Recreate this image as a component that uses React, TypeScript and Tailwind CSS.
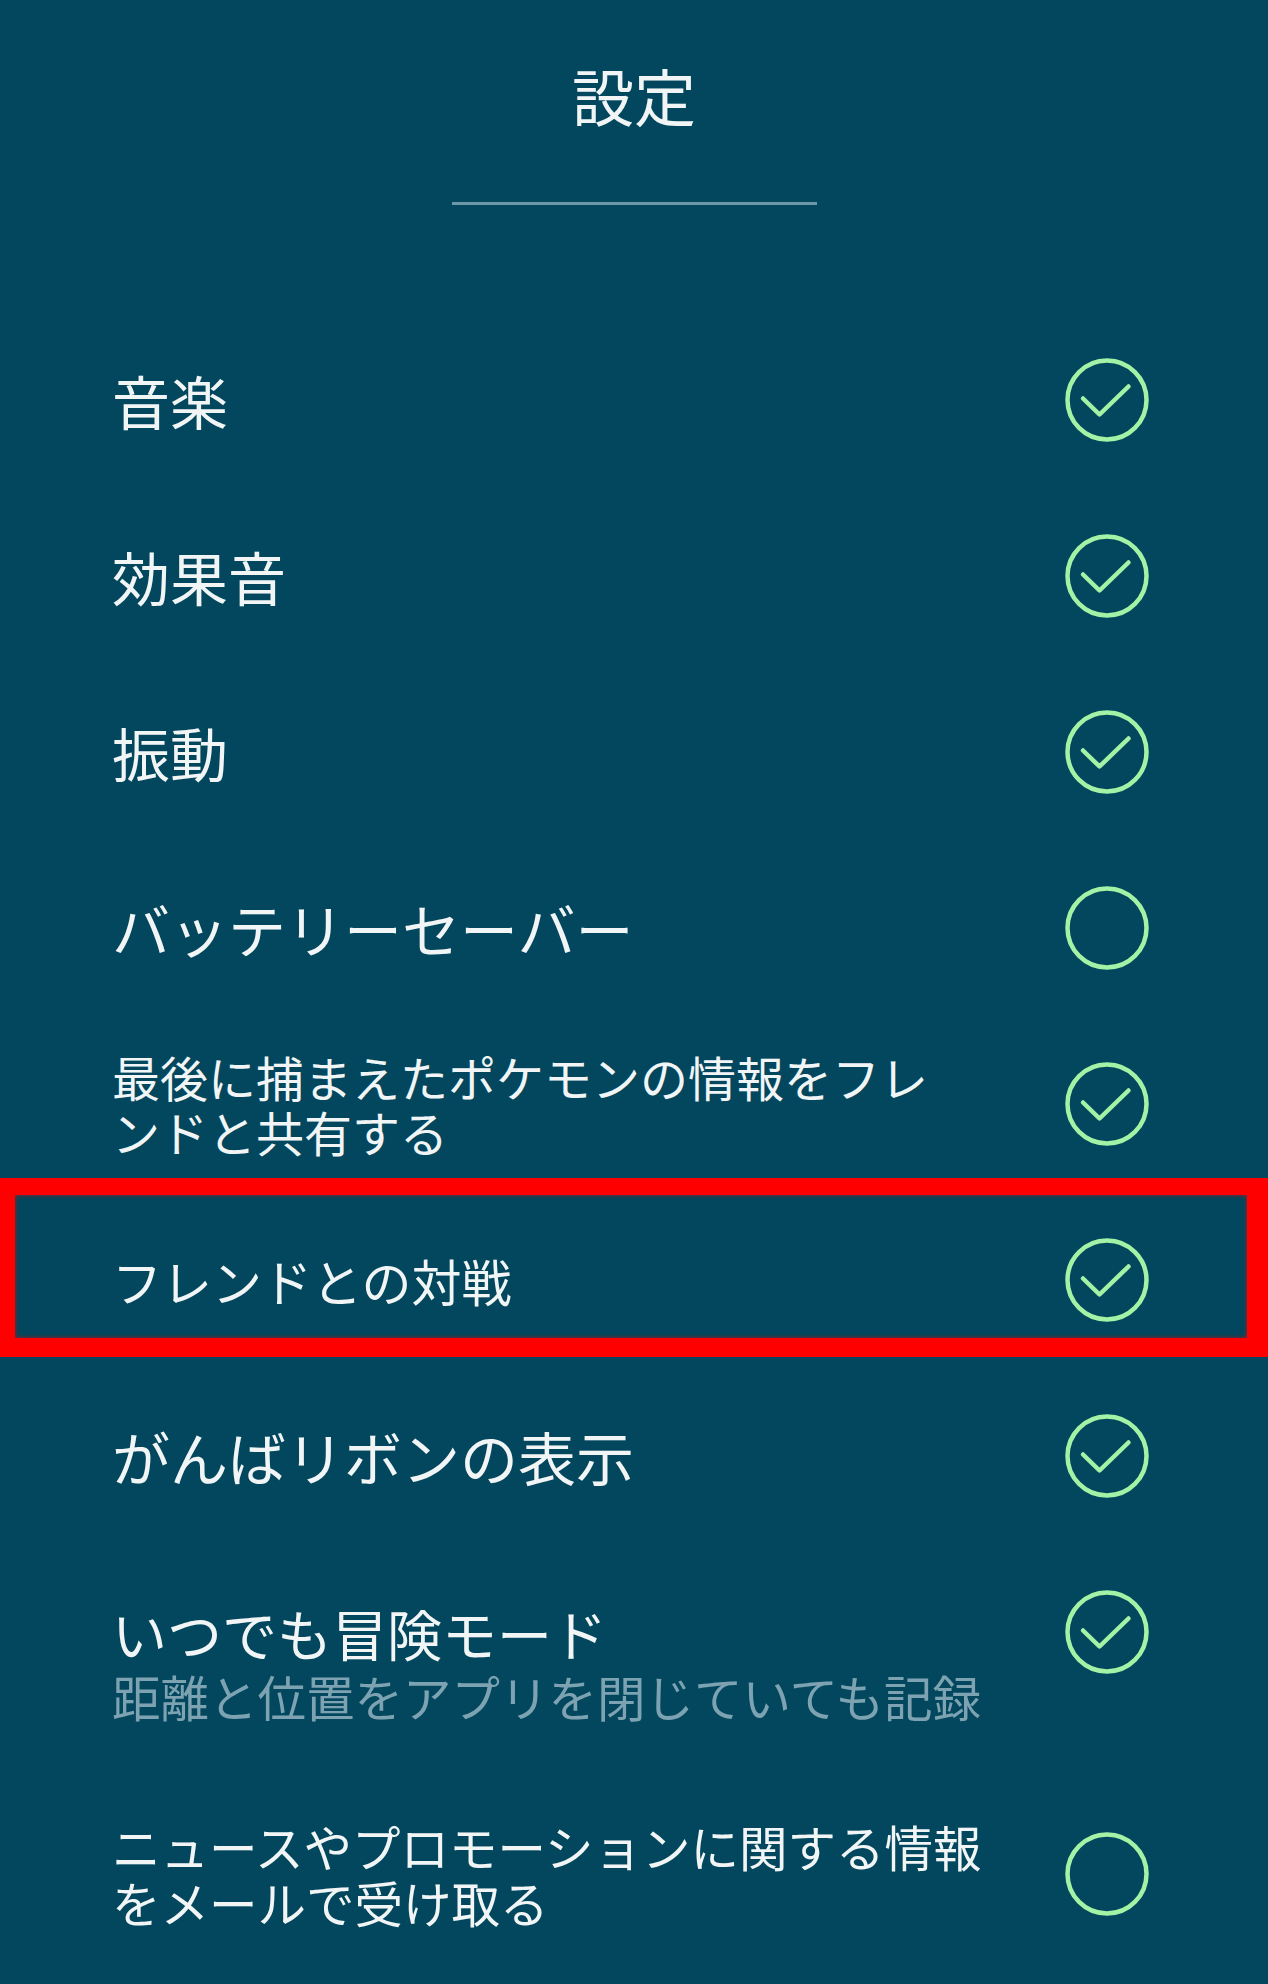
const font = { fontFamily: '"Noto Sans CJK JP", "Noto Sans", sans-serif' };

const CheckCircle = ({ checked }: { checked: boolean }) => (
  <svg width="84" height="84" viewBox="0 0 84 84" fill="none" className="shrink-0">
    <circle cx="42" cy="42" r="39.5" stroke="#a3f2a5" strokeWidth="4.5" />
    {checked && (
      <path
        d="M18 40.5 L34.5 56.5 L63.5 28.5"
        stroke="#a3f2a5"
        strokeWidth="4.5"
        strokeLinecap="round"
        strokeLinejoin="round"
      />
    )}
  </svg>
);

type Item = { lines: string[]; checked: boolean; size: string };

const items: Item[] = [
  { lines: ["音楽"], checked: true, size: "text-[58px] leading-[64px]" },
  { lines: ["効果音"], checked: true, size: "text-[58px] leading-[64px]" },
  { lines: ["振動"], checked: true, size: "text-[58px] leading-[64px]" },
  { lines: ["バッテリーセーバー"], checked: false, size: "text-[58px] leading-[64px]" },
  {
    lines: ["最後に捕まえたポケモンの情報をフレ", "ンドと共有する"],
    checked: true,
    size: "text-[48px] leading-[55px]",
  },
  { lines: ["フレンドとの対戦"], checked: true, size: "text-[50px] leading-[60px]" },
  { lines: ["がんばリボンの表示"], checked: true, size: "text-[58px] leading-[64px]" },
];

const Row = ({ item }: { item: Item }) => (
  <div className="h-[176px] flex items-center justify-between pl-[112px] pr-[119px]">
    <div className={item.size}>
      {item.lines.map((l) => (
        <div key={l} className="whitespace-nowrap">
          {l}
        </div>
      ))}
    </div>
    <CheckCircle checked={item.checked} />
  </div>
);

export default function App() {
  return (
    <div className="relative w-[1268px] h-[1984px] overflow-hidden bg-[#02475d] text-[#f1f5f6]" style={font}>
      <div className="pt-[64px] flex flex-col items-center">
        <div className="text-[62px] leading-[62px] h-[62px]">設定</div>
        <div className="mt-[76px] w-[365px] h-[3px] bg-[#6e98aa]" />
      </div>

      <div className="mt-[107px]">
        {items.map((it, i) => (
          <Row key={i} item={it} />
        ))}

        <div className="pt-[56px] flex justify-between items-start pl-[112px] pr-[119px]">
          <div>
            <div className="text-[55px] leading-[64px] whitespace-nowrap">いつでも冒険モード</div>
            <div className="mt-[4px] text-[48.5px] leading-[56px] whitespace-nowrap text-[#7da3b2]">
              距離と位置をアプリを閉じていても記録
            </div>
          </div>
          <div className="h-[64px] flex items-center">
            <CheckCircle checked={true} />
          </div>
        </div>

        <div className="pt-[40px] h-[260px] flex items-center justify-between pl-[112px] pr-[119px]">
          <div className="text-[48.5px] leading-[56px]">
            <div className="whitespace-nowrap">ニュースやプロモーションに関する情報</div>
            <div className="whitespace-nowrap">をメールで受け取る</div>
          </div>
          <CheckCircle checked={false} />
        </div>
      </div>

      <div className="absolute left-0 top-[1178px] w-[1268px] h-[179px] border-[#ff0000] border-t-[17px] border-b-[19px] border-l-[15px] border-r-[21px] shadow-[inset_0_0_4px_rgba(255,0,0,0.7)]" />
    </div>
  );
}
